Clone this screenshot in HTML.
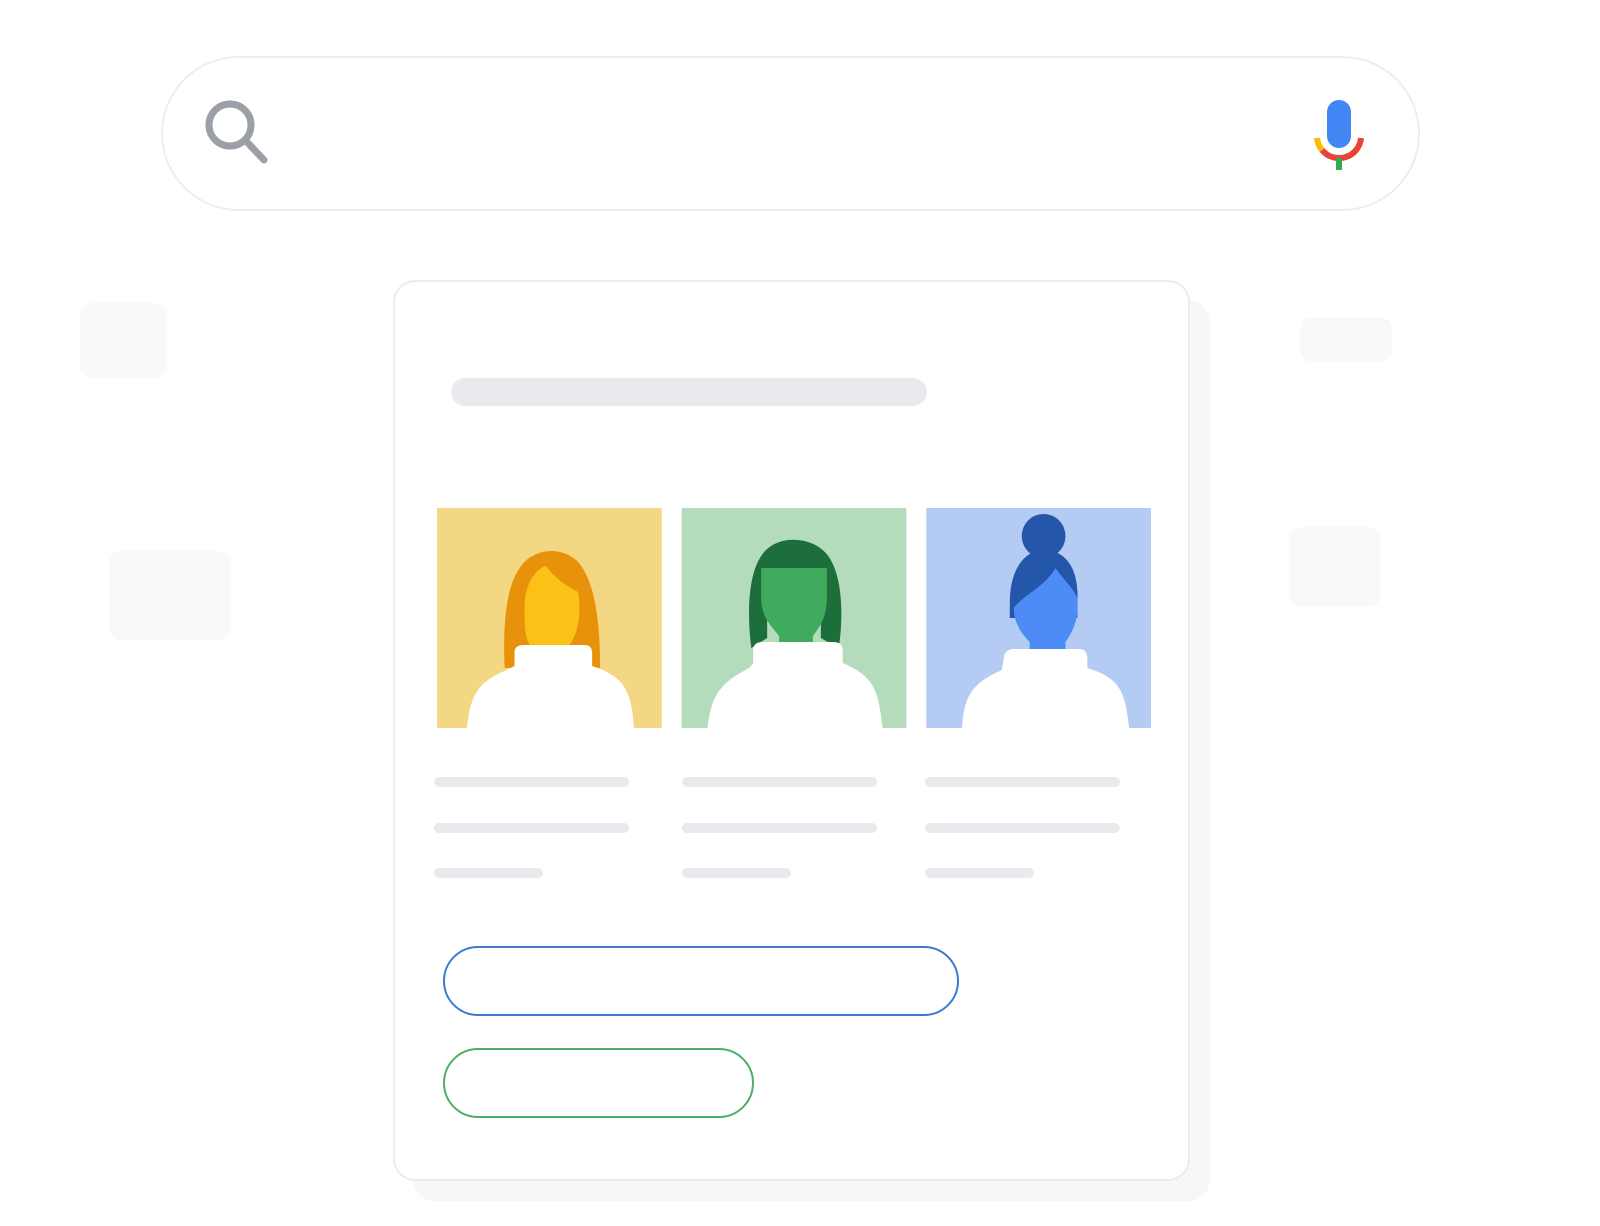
<!DOCTYPE html>
<html><head><meta charset="utf-8"><style>
html,body{margin:0;padding:0;width:1600px;height:1226px;background:#fff;overflow:hidden;position:relative;font-family:"Liberation Sans",sans-serif}
.a{position:absolute}
.blk{position:absolute;background:#f8f9fa;border-radius:12px}
.ln{position:absolute;height:10px;border-radius:5px;background:#e8eaed}
</style></head><body>
<div class="a" style="left:161px;top:56px;width:1259px;height:155px;border:2px solid #eceded;border-radius:78px;box-sizing:border-box"></div>
<svg class="a" style="left:195px;top:95px" width="80" height="80" viewBox="0 0 80 80"><circle cx="35" cy="30" r="21" fill="none" stroke="#9aa0a6" stroke-width="7"/><line x1="51" y1="46" x2="69" y2="65" stroke="#9aa0a6" stroke-width="7" stroke-linecap="round"/></svg>
<svg class="a" style="left:1309px;top:96px" width="60" height="80" viewBox="0 0 60 80">
<rect x="18" y="4" width="24" height="48" rx="12" fill="#4285f4"/>
<path d="M8 42 A22 22 0 0 0 13 54" fill="none" stroke="#fbbc04" stroke-width="6"/>
<path d="M13 54 A22 22 0 0 0 52 42" fill="none" stroke="#ea4335" stroke-width="6"/>
<rect x="27" y="62" width="6" height="12" fill="#34a853"/>
</svg>
<div class="blk" style="left:80px;top:303px;width:87px;height:75px"></div>
<div class="blk" style="left:109px;top:551px;width:122px;height:89px"></div>
<div class="blk" style="left:1300px;top:317px;width:92px;height:45px"></div>
<div class="blk" style="left:1289px;top:527px;width:91px;height:80px"></div>
<div class="a" style="left:413px;top:300px;width:797px;height:901px;background:#f7f7f8;border-radius:22px"></div>
<div class="a" style="left:393px;top:280px;width:797px;height:901px;background:#fff;border:2px solid #ececec;border-radius:22px;box-sizing:border-box"></div>
<div class="ln" style="left:451px;top:378px;width:476px;height:28px;border-radius:14px"></div>
<svg class="a" style="left:437px;top:508px" width="714" height="220" viewBox="0 0 718 220" preserveAspectRatio="none">
<g>
<rect x="0" y="0" width="226" height="220" fill="#f4d782"/>
<path d="M68 160 C66 110 70 70 90 52 C105 40 125 40 140 52 C158 70 164 110 164 160 Z" fill="#e8920c"/>
<path d="M88 100 C88 75 100 60 110 58 C118 70 130 78 142 84 C146 110 140 130 132 138 L130 160 L96 160 L94 138 C88 130 88 115 88 100 Z" fill="#fbc117"/>
<path d="M30 220 C34 190 38 175 70 162 L78 158 L78 145 C78 140 80 137 88 137 L148 137 C154 137 156 140 156 146 L156 158 C186 168 196 180 198 220 Z" fill="#fff"/>
</g>
<g transform="translate(246 0)">
<rect x="0" y="0" width="226" height="220" fill="#b4dbbb"/>
<path d="M70 140 C64 90 70 50 90 38 C105 28 130 30 144 44 C160 60 164 100 158 140 L140 130 L140 60 L86 60 L86 130 Z" fill="#1c6f3a"/>
<path d="M80 60 L146 60 L146 90 C146 110 138 120 132 128 L132 150 L98 150 L98 128 C92 120 80 110 80 90 Z" fill="#41ab5d"/>
<path d="M26 220 C30 190 36 176 68 160 L72 155 L72 142 C72 136 76 134 82 134 L152 134 C158 134 162 136 162 142 L162 155 C192 168 198 180 202 220 Z" fill="#fff"/>
</g>
<g transform="translate(492 0)">
<rect x="0" y="0" width="226" height="220" fill="#b4cbf3"/>
<circle cx="118" cy="28" r="22" fill="#2456a9"/>
<path d="M84 95 C84 60 100 42 118 42 C140 42 154 60 152 95 L152 110 L84 110 Z" fill="#2456a9"/>
<path d="M88 100 C100 85 118 80 130 60 C138 72 148 80 152 90 C154 112 146 126 140 134 L140 152 L104 152 L104 134 C96 126 88 115 88 100 Z" fill="#4e8cf5"/>
<path d="M36 220 C38 190 44 176 76 162 L78 150 C78 145 82 141 88 141 L154 141 C160 141 162 145 162 152 L162 160 C194 170 200 182 204 220 Z" fill="#fff"/>
</g>
</svg>
<div class="ln" style="left:434px;top:777px;width:195px"></div>
<div class="ln" style="left:434px;top:823px;width:195px"></div>
<div class="ln" style="left:434px;top:868px;width:109px"></div>
<div class="ln" style="left:682px;top:777px;width:195px"></div>
<div class="ln" style="left:682px;top:823px;width:195px"></div>
<div class="ln" style="left:682px;top:868px;width:109px"></div>
<div class="ln" style="left:925px;top:777px;width:195px"></div>
<div class="ln" style="left:925px;top:823px;width:195px"></div>
<div class="ln" style="left:925px;top:868px;width:109px"></div>
<div class="a" style="left:443px;top:946px;width:516px;height:70px;border:2.5px solid #3c7bd1;border-radius:36px;box-sizing:border-box"></div>
<div class="a" style="left:443px;top:1048px;width:311px;height:70px;border:2.5px solid #4caf62;border-radius:36px;box-sizing:border-box"></div>
</body></html>
